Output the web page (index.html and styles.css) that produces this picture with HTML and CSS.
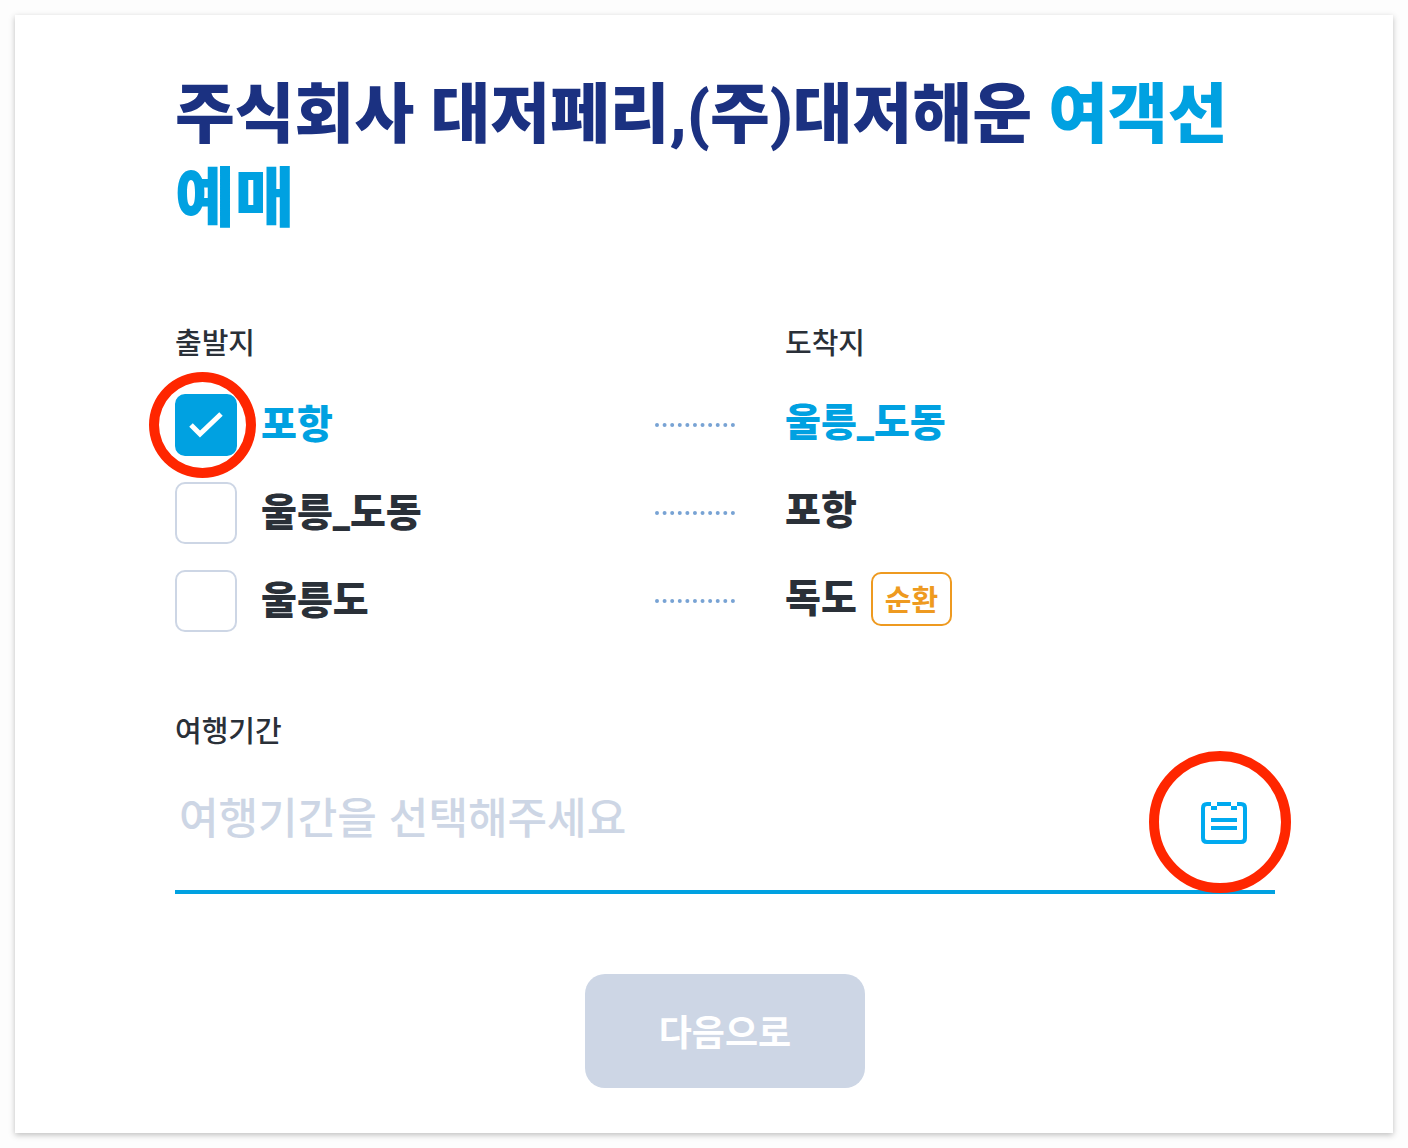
FILE: index.html
```html
<!DOCTYPE html>
<html lang="ko">
<head>
  <meta charset="UTF-8">
  <meta name="viewport" content="width=device-width, initial-scale=1">
  <title>여객선 예매</title>
  <link rel="stylesheet" href="styles.css">
</head>
<body>
  <form class="card">
    <h1 class="title">주식회사 대저페리,(주)대저해운 <span class="accent">여객선 예매</span></h1>

    <div class="routes">
      <div class="route route-head">
        <span class="label">출발지</span>
        <span></span>
        <span class="label">도착지</span>
      </div>

      <div class="route selected">
        <div class="from">
          <span class="check">
            <input type="checkbox" id="route1" checked>
            <svg class="tick" viewBox="0 0 62 62" aria-hidden="true">
              <path d="M16 31 L25 40 L46 20" fill="none" stroke="#fff" stroke-width="5"/>
            </svg>
            <span class="ring ring-check"></span>
          </span>
          <label for="route1">포항</label>
        </div>
        <span class="dots"></span>
        <div class="to"><span class="port">울릉_도동</span></div>
      </div>

      <div class="route">
        <div class="from">
          <span class="check"><input type="checkbox" id="route2"></span>
          <label for="route2">울릉_도동</label>
        </div>
        <span class="dots"></span>
        <div class="to"><span class="port">포항</span></div>
      </div>

      <div class="route">
        <div class="from">
          <span class="check"><input type="checkbox" id="route3"></span>
          <label for="route3">울릉도</label>
        </div>
        <span class="dots"></span>
        <div class="to"><span class="port">독도</span> <span class="badge">순환</span></div>
      </div>
    </div>

    <label class="label" for="period">여행기간</label>
    <div class="period">
      <input type="text" id="period" placeholder="여행기간을 선택해주세요">
      <button type="button" class="calendar" aria-label="달력">
        <svg width="46" height="42" viewBox="0 0 46 42" aria-hidden="true">
          <path d="M10 2 H6 Q2 2 2 6 V36 Q2 40 6 40 H40 Q44 40 44 36 V6 Q44 2 40 2 H36 M16 2 H30 M10 6 H16 M30 6 H36 M10 18 H36 M10 26 H36" fill="none" stroke="#00aaf0" stroke-width="4"/>
        </svg>
        <span class="ring ring-calendar"></span>
      </button>
    </div>

    <button type="submit" class="next">다음으로</button>
  </form>
</body>
</html>
```
FILE: styles.css
```css
* { box-sizing: border-box; }
body {
  margin: 0;
  padding: 15px;
  background: #fdfdfd;
  color: #2a3038;
  font-family: "Noto Sans CJK KR", sans-serif;
}
.card {
  display: flex;
  flex-direction: column;
  padding: 58px 118px 45px 160px;
  background: #fff;
  box-shadow: 0 2px 6px rgba(0,0,0,0.25);
}
.title {
  margin: 0 0 78px;
  font-family: Roboto, "Noto Sans CJK KR", sans-serif;
  font-size: 65px;
  line-height: 84px;
  font-weight: 900;
  color: #1b3181;
  word-break: keep-all;
}
.accent { color: #00a1e1; }
.label {
  font-size: 29px;
  line-height: 44px;
  font-weight: 500;
}

/* routes */
.routes {
  display: flex;
  flex-direction: column;
  gap: 26px;
  margin-bottom: 75px;
}
.route {
  display: grid;
  grid-template-columns: 48fr 13fr 49fr;
  align-items: center;
}
.route-head { margin-bottom: 5px; }
.selected { color: #00a1e1; }
.from {
  display: flex;
  align-items: center;
  gap: 24px;
}
.from label, .port {
  font-family: Roboto, "Noto Sans CJK KR", sans-serif;
  font-size: 39px;
  line-height: 48px;
  font-weight: 900;
}
.check {
  position: relative;
  width: 62px;
  height: 62px;
}
.check input {
  appearance: none;
  display: block;
  width: 100%;
  height: 100%;
  margin: 0;
  border: 2px solid #cdd6e5;
  border-radius: 10px;
  background: #fff;
}
.check input:checked {
  border-color: #00a1e1;
  background: #00a1e1;
}
.tick {
  position: absolute;
  inset: 0;
  pointer-events: none;
}
.dots {
  width: 80px;
  border-top: 4px dotted #78a3d4;
}
.to {
  display: flex;
  align-items: center;
  gap: 14px;
  padding-bottom: 4px;
}
.badge {
  padding: 0 12px 2px;
  border: 2px solid #ee9a20;
  border-radius: 10px;
  color: #ee9a20;
  font-size: 29px;
  line-height: 48px;
  font-weight: 700;
}

/* red markers */
.ring {
  position: absolute;
  border: 10px solid #ff2600;
  border-radius: 50%;
  pointer-events: none;
}
.ring-check {
  top: -22px;
  left: -26px;
  width: 107px;
  height: 106px;
}
.ring-calendar {
  top: -51px;
  left: -52px;
  width: 142px;
  height: 142px;
}

/* travel period */
.period {
  display: flex;
  align-items: center;
  height: 143px;
  margin-bottom: 80px;
  padding: 5px 28px 0 0;
  border-bottom: 4px solid #00a1e1;
}
.period input {
  flex: 1;
  min-width: 0;
  height: 80px;
  padding: 0 4px 16px;
  border: 0;
  outline: 0;
  background: none;
  color: inherit;
  font: 500 43px "Noto Sans CJK KR", sans-serif;
}
.period input::placeholder {
  color: #cdd6e5;
  opacity: 1;
}
.calendar {
  position: relative;
  padding: 0;
  border: 0;
  background: none;
}
.calendar svg { display: block; }

.next {
  align-self: center;
  width: 280px;
  height: 114px;
  padding-bottom: 4px;
  border: 0;
  border-radius: 20px;
  background: #cdd6e5;
  color: #fff;
  font: 700 36px "Noto Sans CJK KR", sans-serif;
}
```
